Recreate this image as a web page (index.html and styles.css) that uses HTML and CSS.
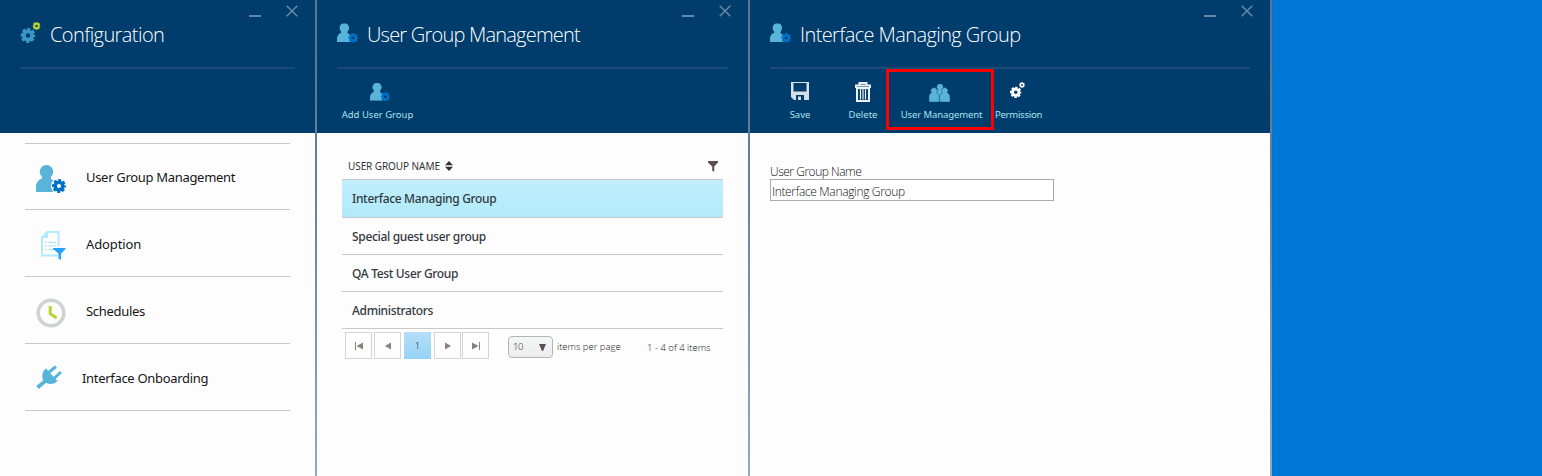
FILE: index.html
```html
<!DOCTYPE html>
<html lang="en">
<head>
<meta charset="utf-8">
<title>User Group Management</title>
<link rel="stylesheet" href="styles.css">
</head>
<body>
<svg class="defs" aria-hidden="true">
  <symbol id="gear" viewBox="0 0 20 20">
    <circle cx="10" cy="10" r="5.5" fill="none" stroke="currentColor" stroke-width="5"/>
    <circle cx="10" cy="10" r="8.4" fill="none" stroke="currentColor" stroke-width="3.200" stroke-dasharray="4.2 2.397" stroke-dashoffset="2.1"/>
  </symbol>
  <symbol id="person" viewBox="0 0 20 27">
    <circle cx="10.500" cy="6.800" r="6.800"/>
    <path d="M6 11h9v3c3 1.500 4.500 4 4.500 8v5H0v-5c0-5 3-7.500 6-8.500z"/>
  </symbol>
  <symbol id="user-gear" viewBox="0 0 30 28">
    <use href="#person" x="0" y="0" width="20" height="27" fill="#59b4d9"/>
    <circle class="gear-gap" cx="23" cy="21" r="8"/>
    <use href="#gear" x="16" y="14" width="14" height="14" color="#0072c6"/>
  </symbol>
</svg>
<main class="blades">
  <section class="blade blade-config">
    <header class="head">
      <div class="controls"><i class="min"></i><svg class="close" viewBox="0 0 12 12"><path d="M.7.7l10.600 10.600M11.300.7L.7 11.300"/></svg></div>
      <div class="title"><svg class="title-icon" viewBox="0 0 20 21"><use href="#gear" x="0" y="6" width="15" height="15" color="#3999c6"/><use href="#gear" x="12" y="0" width="8" height="8" color="#b8d432"/></svg><h1 class="t1">Configuration</h1></div>
      <hr>
    </header>
    <nav class="menu">
      <a class="menu-item first"><svg class="ic-user" viewBox="0 0 30 28"><use href="#user-gear"/></svg><span class="m1">User Group Management</span></a>
      <a class="menu-item"><svg class="ic-doc" viewBox="0 0 25 29">
        <path d="M6.500 1H17.500V24.500H1V6.500z" fill="none" stroke="#b0ebff" stroke-width="2"/>
        <path d="M1 7L7 1V7z" fill="#b0ebff"/>
        <path d="M4 11.500h2M7.500 11.500h7.500M4 15h2M7.500 15h7.500M4 18.500h2M7.500 18.500h6" stroke="#a0e4fc" stroke-width="1.200"/>
        <path d="M10.500 15.500H25V18l-4 4.500V29h-4v-6z" fill="#fdfdfe"/>
        <path d="M12 17h12.500v1l-4.500 4.500V29l-2.500-1.500v-5L12 18z" fill="#25a1ff"/></svg><span class="m2">Adoption</span></a>
      <a class="menu-item"><svg class="ic-clock" viewBox="0 0 30 30"><circle cx="15" cy="15" r="12.800" fill="none" stroke="#d0d2d4" stroke-width="3.600"/><path d="M14.200 8v7.800l6.500 4.200" fill="none" stroke="#b8d432" stroke-width="3"/></svg><span class="m3">Schedules</span></a>
      <a class="menu-item onboarding"><svg class="ic-plug" viewBox="0 0 26 24"><path d="M1.500 22.500L10 15.500" stroke-width="3.600"/><path d="M12 8L20 1.500M18 13.500L25 7" stroke-width="3"/><path class="body" d="M10 3.500L21.500 16C18.500 19.500 12 20 8 16.500C5 13 6 6.500 10 3.500z"/></svg><span class="m4">Interface Onboarding</span></a>
    </nav>
  </section>
  <section class="blade blade-groups">
    <header class="head">
      <div class="controls"><i class="min"></i><svg class="close" viewBox="0 0 12 12"><path d="M.7.7l10.600 10.600M11.300.7L.7 11.300"/></svg></div>
      <div class="title"><svg class="title-icon dark" viewBox="0 0 30 28"><use href="#user-gear"/></svg><h1 class="t2">User Group Management</h1></div>
      <hr>
      <div class="toolbar"><a class="tool add"><svg class="tool-icon dark" viewBox="0 0 30 28"><use href="#user-gear"/></svg><span>Add User Group</span></a></div>
    </header>
    <div class="grid">
      <div class="grid-head"><span>USER GROUP NAME</span><svg class="sort" viewBox="0 0 8 10"><path d="M4 0l4 4.300H0zM4 10L0 5.700h8z"/></svg><svg class="filter" viewBox="0 0 10 11"><path d="M0 0h10v1.500L6.200 5.500V11L4.200 9.500v-4L0 1.500z"/></svg></div>
      <div class="row selected"><span>Interface Managing Group</span></div>
      <div class="row"><span>Special guest user group</span></div>
      <div class="row"><span>QA Test User Group</span></div>
      <div class="row"><span>Administrators</span></div>
      <div class="pager">
        <a class="page"><svg viewBox="0 0 8 8"><path d="M0 0h1v8H0zM8 .5v7L1.500 4z"/></svg></a>
        <a class="page"><svg viewBox="0 0 8 8"><path d="M7 .5v7L1 4z"/></svg></a>
        <a class="page current">1</a>
        <a class="page"><svg viewBox="0 0 8 8"><path d="M1 .5v7L7 4z"/></svg></a>
        <a class="page last"><svg viewBox="0 0 8 8"><path d="M7 0h1v8H7zM0 .5v7L6.500 4z"/></svg></a>
        <div class="size"><span>10</span><svg viewBox="0 0 7 7"><path d="M0 0h7L4 7H3z"/></svg></div>
        <span class="per">items per page</span><span class="count">1 - 4 of 4 items</span>
      </div>
    </div>
  </section>
  <section class="blade blade-detail">
    <header class="head">
      <div class="controls"><i class="min"></i><svg class="close" viewBox="0 0 12 12"><path d="M.7.7l10.600 10.600M11.300.7L.7 11.300"/></svg></div>
      <div class="title"><svg class="title-icon dark" viewBox="0 0 30 28"><use href="#user-gear"/></svg><h1 class="t3">Interface Managing Group</h1></div>
      <hr>
      <div class="toolbar">
        <a class="tool save"><svg class="tool-icon" viewBox="0 0 20 20"><path fill-rule="evenodd" d="M1 1h18v18H4l-3-3zM3.500 2v8.500h13V2zM6 14v5h2v-3.500h3V19h3v-5z" fill="#d5dfea"/></svg><span>Save</span></a>
        <a class="tool delete"><svg class="tool-icon" viewBox="0 0 18 22" fill="none" stroke="#eef3f8"><path d="M5.500 4V2h7v2" stroke-width="2"/><path d="M2 7V4.500h14V7" stroke-width="2"/><path d="M3 7v13h12V7z" stroke-width="2"/><path d="M6.500 8v10.500M9 8v10.500M11.500 8v10.500" stroke-width="1.200"/></svg><span>Delete</span></a>
        <a class="tool users"><svg class="tool-icon" viewBox="0 0 21 18" fill="#59b4d9" stroke="#003c6c" stroke-width=".4"><path d="M7 17V9c0-2 1-3 2-3.500A3.300 3.300 0 1 1 13 5.500c1 .5 2 1.500 2 3.500v8z"/><path d="M0 18v-5c0-2.500 1-3.500 2.500-4.200a3.200 3.200 0 1 1 5 0C9 9.500 10.300 10.500 10.300 13v5z"/><path d="M10.700 18v-5c0-2.500 1-3.500 2.500-4.200a3.200 3.200 0 1 1 5 0C19.700 9.500 21 10.500 21 13v5z"/></svg><span>User Management</span></a>
        <a class="tool permission"><svg class="tool-icon" viewBox="0 0 15 16" color="#fff"><use href="#gear" x="0" y="4.500" width="11.500" height="11.500"/><use href="#gear" x="9" y="0" width="6" height="6"/></svg><span>Permission</span></a>
      </div>
    </header>
    <form class="form"><label for="name">User Group Name</label><input id="name" value="Interface Managing Group"></form>
  </section>
</main>
</body>
</html>
```
FILE: styles.css
```css
* { box-sizing: border-box; }
body { margin: 0; background: #0078d7; font-family: "Noto Sans", "Open Sans", sans-serif; overflow: hidden; }
.defs { position: absolute; width: 0; height: 0; }
.blades { display: flex; height: 476px; }
.blade { background: #fdfdfe; border-right: 2px solid; border-image: linear-gradient(#5a7591, #67809c 40%, #94a9c0) 1; }
.blade-config { width: 317px; }
.blade-groups { width: 433px; }
.blade-detail { width: 522px; }
.head { height: 133px; background: #003c6c; padding: 5px 20px 0; }
.controls { display: flex; justify-content: flex-end; gap: 25px; height: 12px; margin-right: -3px; align-items: flex-end; }
.min { width: 12px; height: 2px; background: #6686a5; }
.close { width: 12px; height: 12px; stroke: #6686a5; stroke-width: 1.6; }
.title { display: flex; align-items: center; height: 34px; }
.title-icon { width: 21px; height: 20px; flex: none; margin-top: -3px; }
.blade-config .title-icon { height: 21px; margin: -3px 0 0; }
.dark { --gap: transparent; }
.gear-gap { fill: var(--gap, #fdfdfe); }
h1 { margin: 0 0 0 9px; font: 300 20px/34px "Open Sans", sans-serif; color: #fff; white-space: nowrap; padding-top: 1px; }
hr { height: 2px; border: 0; margin: 16px 0 0; background: #1a4b77; }
.t1 { letter-spacing: -.58px; }
.t2 { letter-spacing: -.78px; }
.t3 { letter-spacing: -.6px; }
.toolbar { display: flex; height: 61px; }
.tool { display: flex; flex-direction: column; align-items: center; padding-top: 13px; color: #a9e4ef; font-size: 9.5px; line-height: 14px; white-space: nowrap; }
.tool-icon { width: 20px; height: 20px; margin-bottom: 6px; flex: none; }
.add { width: 81px; }
.add .tool-icon { margin-left: 5px; }
.save { width: 60px; }
.save .tool-icon { margin: -1px 0 7px; }
.delete { width: 46px; margin-left: 10px; }
.delete .tool-icon { width: 18px; height: 22px; margin: -1px 0 5px; }
.users { width: 108px; border: 3px solid #f00; padding: 12px 0 0 3px; letter-spacing: -.1px; }
.users .tool-icon { width: 21px; height: 18px; margin: 0 5px 6px 0; }
.permission { width: 49px; letter-spacing: -.25px; }
.permission .tool-icon { width: 15px; height: 16px; margin: 0 2px 10px 0; }
.menu { margin: 10px 25px 0; border-bottom: 1px solid #c8c8c8; height: 268px; }
.menu-item { display: flex; align-items: center; height: 67px; border-top: 1px solid #c8c8c8; padding-left: 11px; font-size: 13px; color: #161616; letter-spacing: -.31px; }
.menu-item span { padding-top: 2px; }
.menu-item.first { height: 66px; }
.first span { padding-top: 1px; }
.menu-item .m2 { letter-spacing: -.1px; }
.ic-user { width: 30px; height: 28px; margin: 4px 20px 0 0; }
.ic-doc { width: 25px; height: 29px; margin: 4px 20px 0 5px; }
.ic-clock { width: 30px; height: 30px; margin: 5px 20px 0 0; }
.ic-plug { width: 26px; height: 24px; margin: 0 20px 0 0; fill: #59b4d9; stroke: #59b4d9; }
.ic-plug .body { stroke: none; }
.grid { margin: 20px 25px 0; }
.grid-head { display: flex; align-items: center; height: 27px; padding: 0 5px 0 6px; border-bottom: 1px solid #c8c8c8; font-size: 10px; color: #333; letter-spacing: -.08px; }
.sort { width: 8px; height: 10px; margin-left: 5px; fill: #333; }
.filter { width: 10px; height: 11px; margin-left: auto; fill: #5b504d; }
.row { height: 37px; border-bottom: 1px solid #c8c8c8; padding-left: 10px; font-size: 12px; font-weight: 500; line-height: 37px; color: #333840; letter-spacing: -.33px; }
.row.selected { height: 38px; line-height: 38px; background: linear-gradient(#c1effd, #b1eafa); }
.pager { display: flex; padding: 3px 0 0 3px; font: 300 9.5px/14px "Open Sans", sans-serif; color: #111; white-space: nowrap; }
.page { display: grid; place-items: center; width: 27px; height: 27px; border: 1px solid #d4d4d4; margin-right: 2px; }
.page.current { background: linear-gradient(#b3dff9, #96d2f5); border: 0; margin: 0 3px 0 1px; }
.page.last { margin-left: -1px; }
.page svg { width: 8px; height: 8px; fill: #8b8280; }
.size { display: flex; align-items: center; justify-content: space-between; width: 45px; height: 22px; margin: 4px 4px 0 17px; padding: 0 6px 0 4px; border: 1px solid #b5b5b5; border-radius: 4px; background: linear-gradient(#f5f6f6, #eaecee); }
.size span { letter-spacing: -.5px; }
.size svg { width: 7px; height: 7px; fill: #5b504d; }
.per { margin-top: 8px; width: 90px; }
.count { margin-top: 9px; }
.form { display: flex; flex-direction: column; padding: 31px 20px 0; font: 300 12px/15px "Open Sans", sans-serif; color: #111; }
.form label { letter-spacing: -.48px; }
.form input { width: 284px; height: 22px; border: 1px solid #a9a9a9; padding: 2px 1px 0; font: inherit; letter-spacing: -.34px; color: inherit; background: #fff; }
```
